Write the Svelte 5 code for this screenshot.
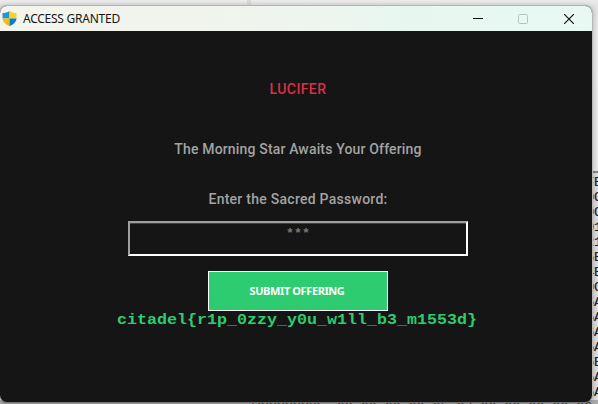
<script>
  const dump = ['FE', '0C', '0C', '01', '21', '5E', '4E', '0C', '5A', '5A', '6A', '5A', '5E', '5A', '5A'];
  const lastRow = '|00000060: 68 60 60 60 6F 67 00 00 00 00 00 00 00';
</script>

<div class="desktop">
  <div class="divider"></div>
  <div class="editor">
    {#each dump as row}<div class="row">{row}</div>{/each}
  </div>
  <div class="last">{lastRow}</div>
  <main class="window">
    <header>
      <svg class="shield" width="15" height="15" viewBox="0 0 15 15">
        <path d="M7.5 0C5.3 1.5 3 2 .5 2v5.5h7z" fill="#2395df" />
        <path d="M7.5 0c2.2 1.5 4.5 2 7 2v5.5h-7z" fill="#ffd21c" />
        <path d="M.5 7.5h7V15C3.5 13.5.8 11.2.5 7.5z" fill="#f7bc12" />
        <path d="M7.5 7.5h7c-.3 3.7-3 6-7 7.5z" fill="#087cd0" />
      </svg>
      <span class="title">ACCESS GRANTED</span>
      <div class="controls">
        <svg width="10" height="10" viewBox="0 0 10 10"><path d="M0 4.5h10" stroke="#111" /></svg>
        <svg width="10" height="10" viewBox="0 0 10 10"><rect x=".5" y=".5" width="9" height="9" rx="1" fill="none" stroke="#b5c4be" /></svg>
        <svg class="close" width="10" height="10" viewBox="0 0 10 10"><path d="M0 0l10 10M10 0L0 10" stroke="#151515" stroke-width="1.2" /></svg>
      </div>
    </header>
    <section>
      <h1>LUCIFER</h1>
      <p class="tagline">The Morning Star Awaits Your Offering</p>
      <p class="prompt">Enter the Sacred Password:</p>
      <div class="field">***</div>
      <button>SUBMIT OFFERING</button>
      <p class="flag">citadel&#123;r1p_0zzy_y0u_w1ll_b3_m1553d&#125;</p>
    </section>
  </main>
</div>

<style>
  .desktop {
    position: relative;
    width: 598px;
    height: 404px;
    overflow: hidden;
    background: linear-gradient(#ebebeb, #e2e2e2 6px, #eaeaea 30px, #e9e9e9 170px, #dedede);
  }
  .divider { position: absolute; left: 247px; top: 0; width: 4px; height: 6px; background: #d9d9d9; }
  .editor {
    position: absolute;
    left: 580px;
    top: 171px;
    width: 18px;
    height: 233px;
    padding: 2px 0 0 6px;
    box-sizing: border-box;
    border-top: 2px solid #858585;
    background: #dedede;
  }
  .row { height: 15px; font: 13.5px/15px "Liberation Mono", monospace; color: #202028; -webkit-text-stroke: 0.2px; white-space: nowrap; }
  .last {
    position: absolute;
    left: 0;
    top: 400px;
    width: 598px;
    height: 4px;
    padding-left: 249px;
    box-sizing: border-box;
    overflow: hidden;
    background: #ababab;
    font: 13.3px/15px "Liberation Mono", monospace;
    color: #353535;
    white-space: nowrap;
  }
  .window {
    position: absolute;
    left: -1px;
    top: 5px;
    width: 594px;
    height: 398px;
    box-sizing: border-box;
    border: 1px solid #b5b5b5;
    border-bottom-color: #777;
    border-right-color: #b9b9b9;
    border-radius: 8px;
    overflow: hidden;
    background: #151515;
    box-shadow: 0 1px 5px #0004;
  }
  header {
    display: flex;
    align-items: center;
    height: 25px;
    padding-left: 2px;
    box-sizing: border-box;
    background: linear-gradient(90deg, #f4f4ec, #f0f4ec 200px, #edf5ef 340px, #e7f7f0 400px, #e8f8f2);
  }
  .title { margin-left: 6px; font: 12px/16px "Noto Sans", sans-serif; letter-spacing: -0.25px; color: #151515; white-space: nowrap; }
  .controls { display: flex; gap: 35px; margin-left: auto; padding-right: 18px; }
  .close { margin-left: 1px; }
  svg { display: block; flex: none; }
  section { display: flex; flex-direction: column; align-items: center; width: 596px; color: #a3a3a3; }
  h1, p { margin: 0; white-space: nowrap; font: 500 14px/18px Roboto, sans-serif; }
  h1 { margin-top: 49px; color: #dc3045; letter-spacing: 0.4px; }
  .tagline { margin-top: 42px; letter-spacing: 0.16px; }
  .prompt { margin-top: 32px; letter-spacing: 0.26px; }
  .field {
    width: 340px;
    height: 35px;
    margin-top: 13px;
    box-sizing: border-box;
    border: 2px solid;
    border-color: #a0a0a0 #fff #fff #a0a0a0;
    box-shadow: inset 0 1px #404040;
    text-align: center;
    font: bold 13.3px/22px "Liberation Mono", monospace;
    color: #777;
  }
  button {
    width: 180px;
    height: 40px;
    margin-top: 15px;
    padding: 0 2px 0 0;
    border: 1px solid #fff;
    background: #2ecc71;
    color: #fff;
    font: bold 11px/18px "Noto Sans", sans-serif;
    letter-spacing: -0.4px;
  }
  .flag {
    margin-right: 2px;
    font: bold 16.66px/18px "Liberation Mono", monospace;
    color: #2ecc71;
    transform: scaleY(.9);
  }
</style>
